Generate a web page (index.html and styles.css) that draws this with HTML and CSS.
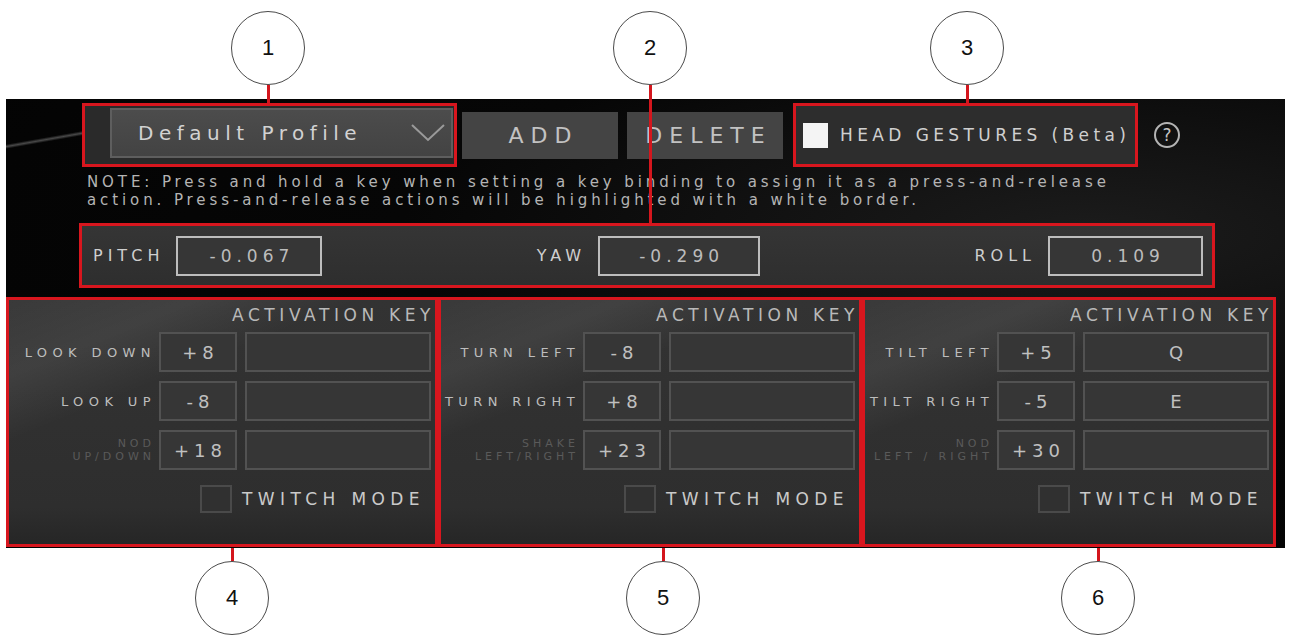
FILE: index.html
```html
<html>
  <head>
    <title>Head Gestures</title>
    <meta name="viewport" content="width=device-width, initial-scale=1">
    <link rel="stylesheet" href="styles.css">
  </head>
  <body>
    <div class="sheet">
      <!-- numbered callouts above the window -->
      <div class="callouts callouts-top">
        <div class="callout c1"><span class="bubble">1</span><span class="stem"></span></div>
        <div class="callout c2"><span class="bubble">2</span><span class="stem stem-long"></span></div>
        <div class="callout c3"><span class="bubble">3</span><span class="stem"></span></div>
      </div>

      <div class="screen">
        <div class="toolbar">
          <div class="mark profile-mark">
            <div class="dropdown">
              <span>Default Profile</span>
              <svg class="chevron" width="34" height="18" viewBox="0 0 34 18">
                <polyline points="1,1 17,16 33,1" fill="none" stroke="#9a9a9a" stroke-width="2"/>
              </svg>
            </div>
          </div>
          <button class="btn btn-add">ADD</button>
          <button class="btn btn-delete">DELETE</button>
          <div class="mark gestures-mark">
            <span class="check on"></span>
            <span class="gestures-label">HEAD GESTURES (Beta)</span>
          </div>
          <span class="help">?</span>
        </div>

        <p class="note">NOTE: Press and hold a key when setting a key binding to assign it as a press-and-release<br>action. Press-and-release actions will be highlighted with a white border.</p>

        <div class="mark readout">
          <div class="axis"><span class="axis-name">PITCH</span><span class="axis-value">-0.067</span></div>
          <div class="axis"><span class="axis-name">YAW</span><span class="axis-value wide">-0.290</span></div>
          <div class="axis"><span class="axis-name">ROLL</span><span class="axis-value mid">0.109</span></div>
        </div>

        <div class="panels">
          <section class="mark panel panel-pitch">
            <div class="panel-head">ACTIVATION KEY</div>
            <div class="rows">
              <div class="row"><span class="row-name">LOOK DOWN</span><span class="cell">+8</span><span class="cell"></span></div>
              <div class="row"><span class="row-name">LOOK UP</span><span class="cell">-8</span><span class="cell"></span></div>
              <div class="row"><span class="row-name dim">NOD<br>UP/DOWN</span><span class="cell">+18</span><span class="cell"></span></div>
            </div>
            <div class="twitch"><span class="box"></span><span>TWITCH MODE</span></div>
          </section>
          <section class="mark panel panel-yaw">
            <div class="panel-head">ACTIVATION KEY</div>
            <div class="rows">
              <div class="row"><span class="row-name">TURN LEFT</span><span class="cell">-8</span><span class="cell"></span></div>
              <div class="row"><span class="row-name">TURN RIGHT</span><span class="cell">+8</span><span class="cell"></span></div>
              <div class="row"><span class="row-name dim">SHAKE<br>LEFT/RIGHT</span><span class="cell">+23</span><span class="cell"></span></div>
            </div>
            <div class="twitch"><span class="box"></span><span>TWITCH MODE</span></div>
          </section>
          <section class="mark panel panel-roll">
            <div class="panel-head">ACTIVATION KEY</div>
            <div class="rows">
              <div class="row"><span class="row-name">TILT LEFT</span><span class="cell">+5</span><span class="cell">Q</span></div>
              <div class="row"><span class="row-name">TILT RIGHT</span><span class="cell">-5</span><span class="cell">E</span></div>
              <div class="row"><span class="row-name dim">NOD<br>LEFT / RIGHT</span><span class="cell">+30</span><span class="cell"></span></div>
            </div>
            <div class="twitch"><span class="box"></span><span>TWITCH MODE</span></div>
          </section>
        </div>
      </div>

      <!-- numbered callouts below the window -->
      <div class="callouts callouts-bottom">
        <div class="callout c4"><span class="stem stem-short"></span><span class="bubble">4</span></div>
        <div class="callout c5"><span class="stem stem-short"></span><span class="bubble">5</span></div>
        <div class="callout c6"><span class="stem stem-short"></span><span class="bubble">6</span></div>
      </div>
    </div>
  </body>
</html>
```

FILE: styles.css
```css
body {
  margin: 0;
  background: #fff;
  font-family: "DejaVu Sans", sans-serif;
}
.sheet {
  width: 1290px;
  height: 640px;
  overflow: hidden;
}

/* Callouts */
.callouts {
  display: flex;
  align-items: flex-start;
}
.callouts-top {
  height: 99px;
  padding-top: 11px;
  box-sizing: border-box;
}
.callouts-bottom {
  height: 92px;
}
.callout {
  position: relative;
  z-index: 3;
  width: 74px;
  display: flex;
  flex-direction: column;
  align-items: center;
}
.c1 { margin-left: 231px; }
.c2 { margin-left: 308px; }
.c3 { margin-left: 243px; }
.c4 { margin-left: 195px; }
.c5 { margin-left: 357px; }
.c6 { margin-left: 361px; }
.bubble {
  width: 74px;
  height: 74px;
  box-sizing: border-box;
  border: 1.5px solid #4a4a4a;
  border-radius: 50%;
  background: #fff;
  display: flex;
  align-items: center;
  justify-content: center;
  font: 22px "Liberation Sans", sans-serif;
  color: #111;
}
.stem {
  width: 3px;
  height: 18px;
  background: #d4161d;
}
.stem-long { height: 139px; }
.stem-short { height: 13px; }

/* Dark app window */
.screen {
  margin-left: 6px;
  width: 1279px;
  height: 449px;
  background:
    linear-gradient(170deg, transparent 57%, rgba(200, 200, 200, 0.35) 60%, transparent 63%) 0 0 / 110px 60px no-repeat,
    radial-gradient(ellipse at 85% 30%, #1c1c1c 0%, #060606 45%, #020202 100%);
  color: #c6c6c6;
  overflow: hidden;
}
.mark {
  border: 3px solid #d8161e;
  box-sizing: border-box;
}

/* Profile bar */
.toolbar {
  display: flex;
  align-items: center;
  margin-top: 4px;
  height: 64px;
  padding-left: 76px;
}
.profile-mark {
  width: 375px;
  height: 64px;
  background: #2a2a2a;
  display: flex;
  align-items: flex-start;
  padding: 2px 0 0 25px;
}
.dropdown {
  width: 343px;
  height: 50px;
  box-sizing: border-box;
  background: linear-gradient(180deg, #4c4c4c, #434343);
  border: 2px solid #5e5e5e;
  display: flex;
  align-items: center;
  padding-left: 26px;
  font-size: 20px;
  letter-spacing: 5.5px;
  color: #d2d2d2;
}
.chevron {
  margin-left: auto;
  margin-right: 6px;
}
.btn {
  width: 156px;
  height: 47px;
  border: none;
  background: #444;
  color: #c2c2c2;
  font-family: "DejaVu Sans", sans-serif;
  font-size: 22px;
  letter-spacing: 7px;
  padding: 0 0 0 7px;
}
.btn-add { margin-left: 5px; }
.btn-delete { margin-left: 9px; }
.gestures-mark {
  width: 345px;
  height: 64px;
  margin-left: 10px;
  background: #2d2d2d;
  display: flex;
  align-items: center;
  padding-left: 7px;
}
.check {
  width: 25px;
  height: 25px;
  background: #f4f4f4;
}
.gestures-label {
  margin-left: 12px;
  font-size: 17px;
  letter-spacing: 4.4px;
  color: #d0d0d0;
  white-space: nowrap;
}
.help {
  margin-left: 16px;
  width: 26px;
  height: 26px;
  box-sizing: border-box;
  border: 2px solid #b4b4b4;
  border-radius: 50%;
  display: flex;
  align-items: center;
  justify-content: center;
  font-size: 17px;
  color: #c4c4c4;
}

.note {
  margin: 6px 0 0 81px;
  font-size: 15px;
  line-height: 18px;
  letter-spacing: 3.9px;
  color: #b4b4b4;
  white-space: nowrap;
}

/* Pitch / yaw / roll readout */
.readout {
  margin: 14px 0 0 73px;
  width: 1136px;
  height: 65px;
  padding: 0 9px 0 11px;
  background: linear-gradient(180deg, #353535, #2e2e2e);
  display: flex;
  align-items: center;
  justify-content: space-between;
}
.axis {
  display: flex;
  align-items: center;
  gap: 12px;
}
.axis-name {
  font-size: 16px;
  letter-spacing: 5px;
  color: #cfcfcf;
}
.axis-value {
  width: 146px;
  height: 40px;
  box-sizing: border-box;
  border: 2px solid #bdbdbd;
  background: #363636;
  display: flex;
  align-items: center;
  justify-content: center;
  padding-left: 5px;
  font-size: 17px;
  letter-spacing: 5px;
  color: #bcbcbc;
}
.axis-value.wide { width: 162px; }
.axis-value.mid { width: 155px; }

/* Gesture panels */
.panels {
  display: flex;
  margin-top: 9px;
  height: 250px;
}
.panel {
  height: 250px;
  padding: 3px 4px 0 0;
  display: flex;
  flex-direction: column;
  background:
    linear-gradient(158deg, rgba(255, 255, 255, 0.03) 0%, rgba(255, 255, 255, 0.07) 18%, transparent 34%),
    linear-gradient(180deg, #333 0%, #2e2e2e 85%, #262626 100%);
}
.panel-pitch { width: 432px; }
.panel-yaw { width: 424px; }
.panel-roll { width: 414px; }
.panel-head {
  text-align: right;
  font-size: 17px;
  line-height: 24px;
  letter-spacing: 4.6px;
  margin-right: -4px;
  margin-bottom: 5px;
  color: #b9b9b9;
}
.rows {
  display: flex;
  flex-direction: column;
  gap: 9px;
}
.row {
  display: grid;
  grid-template-columns: 1fr 78px 186px;
  gap: 8px;
  height: 40px;
}
.row-name {
  align-self: center;
  text-align: right;
  font-size: 13px;
  letter-spacing: 5.4px;
  margin-right: -5px;
  color: #bdbdbd;
  white-space: nowrap;
}
.row-name.dim {
  font-size: 11px;
  line-height: 13px;
  letter-spacing: 4px;
  margin-right: -4px;
  color: #5a5a5a;
}
.cell {
  box-sizing: border-box;
  border: 2px solid #525252;
  background: #363636;
  display: flex;
  align-items: center;
  justify-content: center;
  padding-left: 5px;
  font-size: 18px;
  letter-spacing: 5px;
  color: #c0c0c0;
}
.twitch {
  display: flex;
  align-items: center;
  justify-content: flex-end;
  margin-top: 15px;
  padding-right: 6px;
  font-size: 17px;
  letter-spacing: 5.4px;
  color: #cacaca;
}
.twitch .box {
  width: 32px;
  height: 28px;
  box-sizing: border-box;
  border: 2px solid #4a4a4a;
  background: #303030;
  margin-right: 10px;
}
```
